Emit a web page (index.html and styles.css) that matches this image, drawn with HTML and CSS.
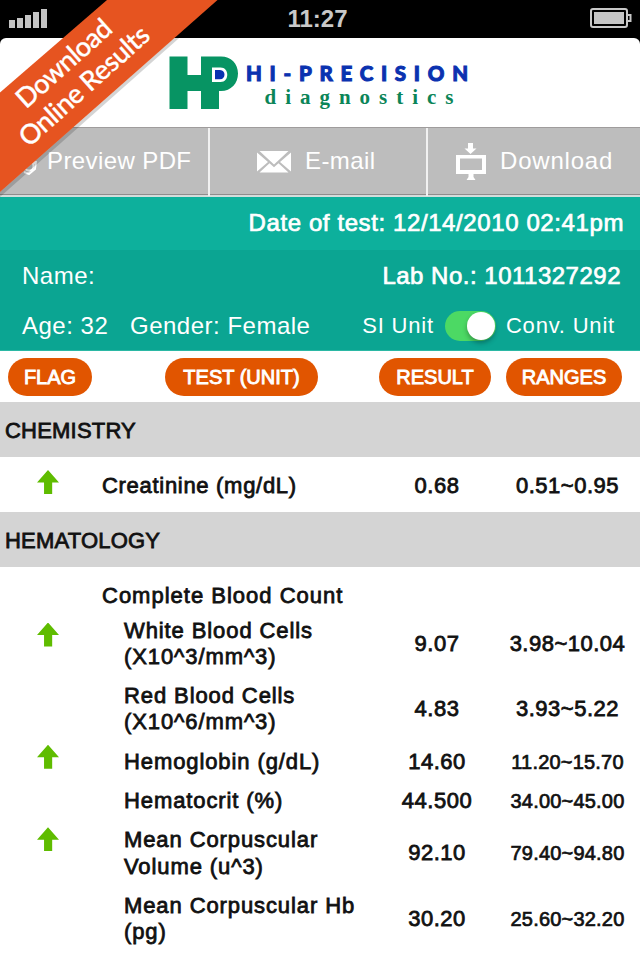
FILE: index.html
```html
<!DOCTYPE html>
<html lang="en">
<head>
  <meta charset="UTF-8" />
  <meta name="viewport" content="width=device-width, initial-scale=1.0"/>
  <title>Hi-Precision Diagnostics</title>
  <link rel="stylesheet" href="styles.css">
</head>
<body>
  <!-- Status bar -->
  <div class="status-bar">
    <svg class="signal" width="39" height="20" viewBox="0 0 39 20">
      <path d="M0 11h6v8H0zM8 9h6v10H8zM16 6h6v13h-6zM24 3h6v16h-6zM32 0h6v19h-6z" fill="#c4c4c4"/>
    </svg>
    <span class="clock">11:27</span>
    <svg class="battery" width="42" height="20" viewBox="0 0 42 20">
      <rect x="1" y="1" width="36" height="18" rx="2" fill="none" stroke="#c8c8c8" stroke-width="2"/>
      <rect x="4" y="4" width="30" height="12" fill="#c4c4c4"/>
      <path d="M38 7h2.500v6H38" fill="none" stroke="#c8c8c8" stroke-width="2"/>
    </svg>
  </div>

  <div class="app">
    <!-- Logo -->
    <header class="brand">
      <svg width="302" height="60" viewBox="168 52 302 60">
        <path d="M169.500 56.500h18V75H201V56.500h20c10 0 17 7 17 17s-7 17.500-17 17.500h-2v18h-18V91h-13.500v18h-18z" fill="#079463"/>
        <path d="M212 67.500h8.500c9 0 9 14.500 0 14.500H212z" fill="#fff"/>
        <path d="M215 70h5c6 0 6 9.300 0 9.300h-5z" fill="#0a32b0"/>
        <text class="logo-name" x="246" y="80.800" textLength="222">HI-PRECISION</text>
        <text class="logo-sub" x="264.500" y="103.500" textLength="189">diagnostics</text>
      </svg>
    </header>

    <!-- Toolbar -->
    <nav class="toolbar">
      <a class="tool tool-preview">
        <svg width="22" height="26" viewBox="0 0 22 26" fill="none" stroke="#fff" stroke-width="2">
          <path d="M3 1h10l5 5v9M3 1v20h5"/>
          <circle cx="13" cy="17" r="4.500"/>
          <path d="M8 23l5 2 6-5 1-8"/>
        </svg>
        <span>Preview PDF</span>
      </a>
      <a class="tool tool-email">
        <svg width="34" height="22" viewBox="0 0 34 22" fill="#fff">
          <path d="M2.500 0h29L17 13.500zM0 1.500L11 11 0 20.500zM34 1.500V20.500L23 11zM12.500 12.200L17 16.300l4.500-4.100L31.500 21.500h-29z"/>
        </svg>
        <span>E-mail</span>
      </a>
      <a class="tool tool-download">
        <svg width="30" height="37" viewBox="0 0 30 37" fill="#fff">
          <path d="M12 0h5v5.500h3.500L14.500 11l-6-5.500H12z"/>
          <path d="M0 12h30v19H0zM4 15.500v11.500h22V15.500z" fill-rule="evenodd"/>
          <path d="M12.500 31h5v3l2 3h-9l2-3z"/>
        </svg>
        <span>Download</span>
      </a>
    </nav>

    <!-- Patient info -->
    <section class="test-date">Date of test: 12/14/2010 02:41pm</section>
    <section class="patient">
      <div class="patient-row">
        <span>Name:</span>
        <span class="lab-no">Lab No.: 1011327292</span>
      </div>
      <div class="patient-row second">
        <span class="age">Age: 32</span>
        <span>Gender: Female</span>
        <div class="units">
          <span>SI Unit</span>
          <span class="switch"><span class="knob"></span></span>
          <span>Conv. Unit</span>
        </div>
      </div>
    </section>

    <!-- Column titles -->
    <div class="columns">
      <span class="pill flag">FLAG</span>
      <span class="pill test">TEST (UNIT)</span>
      <span class="pill result">RESULT</span>
      <span class="pill ranges">RANGES</span>
    </div>

    <!-- Results -->
    <h2 class="group">CHEMISTRY</h2>
    <div class="row single">
      <span class="flag-cell"><i class="arrow"></i></span>
      <span class="name">Creatinine (mg/dL)</span>
      <span class="value">0.68</span>
      <span class="value">0.51~0.95</span>
    </div>

    <h2 class="group">HEMATOLOGY</h2>
    <div class="row title">
      <span></span>
      <span class="name">Complete Blood Count</span>
    </div>
    <div class="row">
      <span class="flag-cell wbc"><i class="arrow"></i></span>
      <span class="name sub">White Blood Cells<br>(X10^3/mm^3)</span>
      <span class="value">9.07</span>
      <span class="value">3.98~10.04</span>
    </div>
    <div class="row">
      <span></span>
      <span class="name sub">Red Blood Cells<br>(X10^6/mm^3)</span>
      <span class="value">4.83</span>
      <span class="value">3.93~5.22</span>
    </div>
    <div class="row">
      <span class="flag-cell hgb"><i class="arrow"></i></span>
      <span class="name sub">Hemoglobin (g/dL)</span>
      <span class="value">14.60</span>
      <span class="value long">11.20~15.70</span>
    </div>
    <div class="row">
      <span></span>
      <span class="name sub">Hematocrit (%)</span>
      <span class="value">44.500</span>
      <span class="value long">34.00~45.00</span>
    </div>
    <div class="row">
      <span class="flag-cell mcv"><i class="arrow"></i></span>
      <span class="name sub">Mean Corpuscular<br>Volume (u^3)</span>
      <span class="value">92.10</span>
      <span class="value long">79.40~94.80</span>
    </div>
    <div class="row">
      <span></span>
      <span class="name sub">Mean Corpuscular Hb<br>(pg)</span>
      <span class="value">30.20</span>
      <span class="value long">25.60~32.20</span>
    </div>
  </div>

  <!-- Corner ribbon -->
  <svg class="ribbon" width="230" height="204" viewBox="0 0 230 204">
    <path d="M217 0L0 192v5L222 0z" fill="#000" opacity=".17"/>
    <path d="M107 0h110.500L0 192V92.500z" fill="#e65420"/>
    <text transform="translate(26 109.500) rotate(-41.700)" textLength="118">Download</text>
    <text transform="translate(29 148) rotate(-42)" textLength="165">Online Results</text>
  </svg>
</body>
</html>
```
FILE: styles.css
```css
/* Global Styles */
* {
  box-sizing: border-box;
}

body {
  margin: 0;
  width: 640px;
  height: 960px;
  position: relative;
  overflow: hidden;
  background: #000;
  font-family: "Liberation Sans", Arial, sans-serif;
}

/* Status Bar */
.status-bar {
  display: grid;
  grid-template-columns: 1fr auto 1fr;
  align-items: center;
  height: 38px;
  padding: 0 8px 0 3px;
  color: #c9c9c9;
}

.signal {
  margin-left: 6px;
}

.clock {
  font-size: 24px;
  font-weight: bold;
}

.battery {
  justify-self: end;
  margin-top: -2px;
}

.app {
  height: 922px;
  background: #fff;
  border-radius: 6px 6px 0 0;
  overflow: hidden;
}

/* Logo */
.brand {
  height: 89px;
  padding: 14px 0 0 168px;
}

.brand svg {
  display: block;
}

.logo-name {
  font: 900 20.5px Lato, sans-serif;
  fill: #0a32b0;
  stroke: #0a32b0;
  stroke-width: 1px;
}

.logo-sub {
  font: bold 21px "Liberation Serif", serif;
  fill: #0b8558;
}

/* Toolbar */
.toolbar {
  display: flex;
  height: 70px;
  background: #bdbdbd;
  border-top: 1px solid #9f9c9c;
  border-bottom: 2px solid #d4dcdb;
  box-shadow: inset 0 -1px 0 #8f8c8c;
}

.tool {
  display: flex;
  align-items: center;
  height: 68px;
  padding-bottom: 1px;
  border-right: 2px solid #f1f1f1;
  color: #fff;
  font-size: 24px;
  letter-spacing: 0.4px;
}

.tool span {
  margin-top: -2px;
}

.tool-preview {
  width: 210px;
  padding-left: 16px;
  gap: 9px;
}

.tool-email {
  width: 218px;
  padding-left: 47px;
  gap: 14px;
}

.tool-download {
  width: 212px;
  padding-left: 28px;
  gap: 14px;
  border-right: none;
  letter-spacing: 0.8px;
}

/* Patient Info */
.test-date {
  height: 53px;
  padding-right: 16px;
  background: #0db09c;
  color: #fff;
  font-size: 24px;
  line-height: 52px;
  letter-spacing: 0.6px;
  text-align: right;
  -webkit-text-stroke: 0.7px #fff;
}

.patient {
  height: 101px;
  padding: 1px 19px 0 22px;
  background: #0ba592;
  border-bottom: 1px solid #2bb8a4;
  color: #fff;
  font-size: 24px;
  letter-spacing: 0.5px;
}

.patient-row {
  display: flex;
  align-items: center;
  justify-content: space-between;
  height: 50px;
}

.patient-row.second {
  justify-content: flex-start;
}

.lab-no {
  -webkit-text-stroke: 0.7px #fff;
}

.age {
  width: 108px;
}

.units {
  display: flex;
  align-items: center;
  margin-left: auto;
  margin-right: 6px;
  font-size: 22px;
  letter-spacing: 0.8px;
}

.switch {
  display: flex;
  justify-content: flex-end;
  width: 51px;
  height: 30px;
  margin: 0 10px 0 11px;
  padding: 1px;
  border-radius: 15px;
  background: #4cd964;
}

.knob {
  width: 28px;
  height: 28px;
  border-radius: 50%;
  background: #fff;
  box-shadow: 0 3px 5px rgba(0, 0, 0, 0.3);
}

/* Column Titles */
.columns {
  display: flex;
  height: 51px;
  padding: 7px 18px 0 8px;
}

.pill {
  height: 38px;
  border-radius: 19px;
  background: #e15500;
  color: #fff;
  font-size: 20px;
  line-height: 39px;
  text-align: center;
  -webkit-text-stroke: 0.9px #fff;
}

.pill.flag {
  width: 84px;
}

.pill.test {
  width: 153px;
  margin-left: 73px;
}

.pill.result {
  width: 112px;
  margin-left: 61px;
}

.pill.ranges {
  width: 116px;
  margin-left: 15px;
}

/* Results */
.group {
  height: 55px;
  margin: 0;
  padding-left: 5px;
  background: #d4d4d4;
  color: #111;
  font-size: 22px;
  font-weight: normal;
  line-height: 57px;
  letter-spacing: 0.2px;
  -webkit-text-stroke: 0.8px #111;
}

.row {
  display: grid;
  grid-template-columns: 102px 275px 120px 141px;
  align-items: center;
  padding: 6.500px 0;
  color: #111;
  font-size: 22px;
  line-height: 26.300px;
  -webkit-text-stroke: 0.8px #111;
}

.row.single {
  height: 55px;
  padding: 8px 0 5px;
}

.row.title {
  height: 44px;
  padding: 14px 0 0;
}

.name {
  letter-spacing: 0.9px;
}

.single .name {
  letter-spacing: 0.7px;
}

.title .name {
  letter-spacing: 1px;
}

.name.sub {
  padding-left: 22px;
}

.value {
  text-align: center;
  letter-spacing: 0.5px;
}

.value.long {
  font-size: 20px;
  letter-spacing: 0.2px;
  -webkit-text-stroke-width: 0.7px;
}

/* Flags */
.flag-cell {
  height: 24px;
  padding-left: 37px;
  align-self: start;
}

.single .flag-cell {
  margin-top: 5px;
}

.flag-cell.wbc {
  margin-top: 5px;
}

.flag-cell.hgb {
  margin-top: -4px;
}

.arrow {
  display: block;
  width: 22px;
  height: 24px;
  background: #5fbc00;
  clip-path: polygon(50% 0, 100% 52%, 69% 52%, 69% 100%, 32% 100%, 32% 52%, 0 52%);
}

/* Ribbon */
.ribbon {
  position: absolute;
  top: 0;
  left: 0;
}

.ribbon text {
  font: 500 27px Lato, sans-serif;
  fill: #fff;
  stroke: #fff;
  stroke-width: 0.3px;
}
```
